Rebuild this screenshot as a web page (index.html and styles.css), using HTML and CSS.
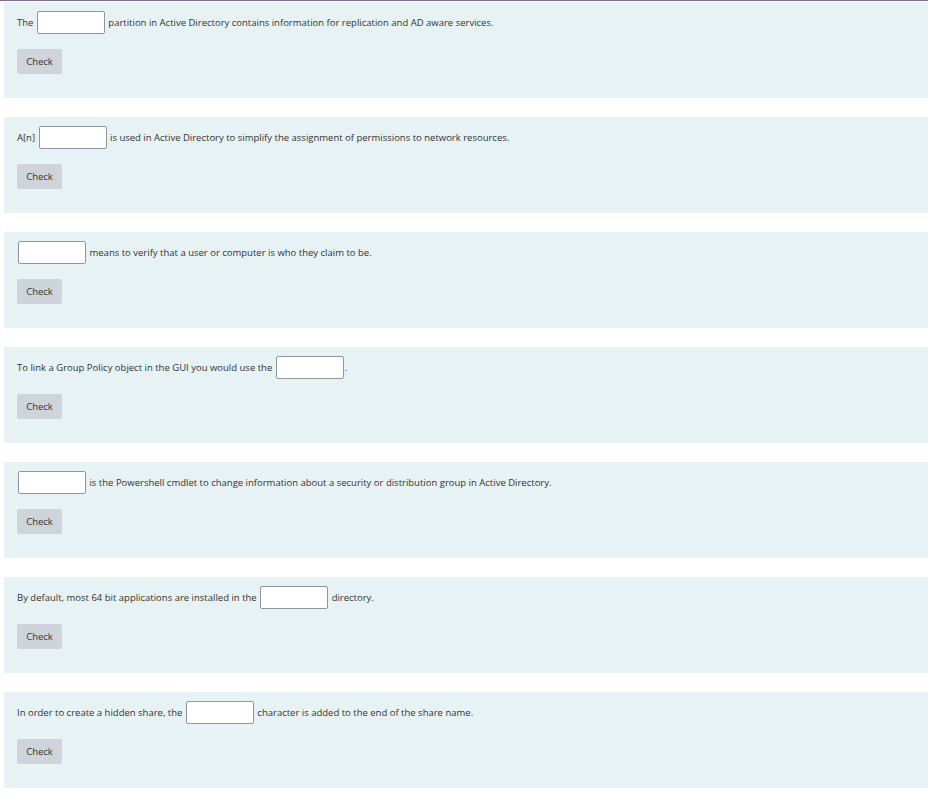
FILE: index.html
```html
<!DOCTYPE html>
<html lang="en">
<head>
    <meta charset="UTF-8">
    <title>Active Directory Quiz</title>
    <link rel="stylesheet" href="styles.css">
</head>
<body>
    <div class="quiz">
        <div class="question">
            <div class="prompt">The <input type="text" class="blank"> partition in Active Directory contains information for replication and AD aware services.</div>
            <button class="check-btn">Check</button>
        </div>

        <div class="question">
            <div class="prompt">A[n] <input type="text" class="blank"> is used in Active Directory to simplify the assignment of permissions to network resources.</div>
            <button class="check-btn">Check</button>
        </div>

        <div class="question">
            <div class="prompt"><input type="text" class="blank"> means to verify that a user or computer is who they claim to be.</div>
            <button class="check-btn">Check</button>
        </div>

        <div class="question">
            <div class="prompt">To link a Group Policy object in the GUI you would use the <input type="text" class="blank">.</div>
            <button class="check-btn">Check</button>
        </div>

        <div class="question">
            <div class="prompt"><input type="text" class="blank"> is the Powershell cmdlet to change information about a security or distribution group in Active Directory.</div>
            <button class="check-btn">Check</button>
        </div>

        <div class="question">
            <div class="prompt">By default, most 64 bit applications are installed in the <input type="text" class="blank"> directory.</div>
            <button class="check-btn">Check</button>
        </div>

        <div class="question">
            <div class="prompt">In order to create a hidden share, the <input type="text" class="blank"> character is added to the end of the share name.</div>
            <button class="check-btn">Check</button>
        </div>
    </div>
</body>
</html>
```

FILE: styles.css
```css
body {
    font-family: 'Open Sans', 'Noto Sans', sans-serif;
    font-size: 9.5px;
    color: #333;
    background: #fff;
    margin: 0;
    border-top: 1px solid #7e6a8a;
    padding: 1px 0 0 4px;
}

.question {
    background: #e7f2f5;
    height: 96px;
    box-sizing: border-box;
    padding: 8px 13px 0;
    margin-bottom: 19px;
}

.prompt {
    display: flex;
    align-items: center;
    height: 23px;
    padding-top: 1px;
    white-space: pre;
}

.blank {
    width: 68px;
    height: 23px;
    box-sizing: border-box;
    margin: -1px 1px 0;
    padding: 0 4px;
    border: 1px solid #8f979e;
    border-radius: 2px;
    background: #fff;
}

.check-btn {
    display: block;
    margin-top: 15px;
    width: 45px;
    height: 25px;
    padding: 0;
    border: none;
    border-radius: 2px;
    background: #ced4da;
    color: #333;
    font-family: inherit;
    font-size: 9.5px;
}
```
